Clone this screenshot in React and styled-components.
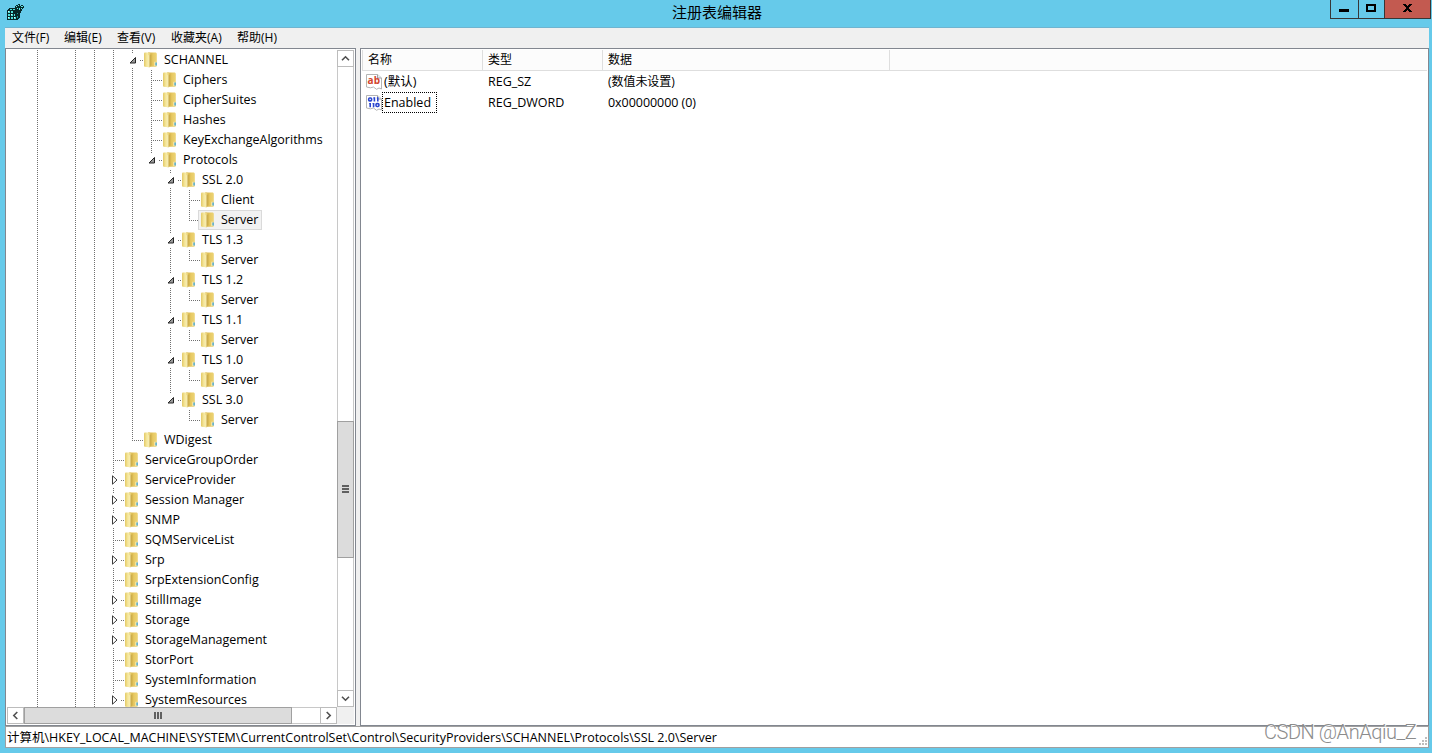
import styled, { createGlobalStyle, css } from "styled-components";

const GUIDE = "#707070";

// guide codes, one per 19px column:
// " " empty, "|" line, "T" branch, "L" last branch,
// "v" open, "w" open and last, ">" closed
const tree = [
  { guides: "| |||v", name: "SCHANNEL" },
  { guides: "| ||||T", name: "Ciphers" },
  { guides: "| ||||T", name: "CipherSuites" },
  { guides: "| ||||T", name: "Hashes" },
  { guides: "| ||||T", name: "KeyExchangeAlgorithms" },
  { guides: "| ||||w", name: "Protocols" },
  { guides: "| |||| v", name: "SSL 2.0" },
  { guides: "| |||| |T", name: "Client" },
  { guides: "| |||| |L", name: "Server", selected: true },
  { guides: "| |||| v", name: "TLS 1.3" },
  { guides: "| |||| |L", name: "Server" },
  { guides: "| |||| v", name: "TLS 1.2" },
  { guides: "| |||| |L", name: "Server" },
  { guides: "| |||| v", name: "TLS 1.1" },
  { guides: "| |||| |L", name: "Server" },
  { guides: "| |||| v", name: "TLS 1.0" },
  { guides: "| |||| |L", name: "Server" },
  { guides: "| |||| w", name: "SSL 3.0" },
  { guides: "| ||||  L", name: "Server" },
  { guides: "| |||L", name: "WDigest" },
  { guides: "| ||T", name: "ServiceGroupOrder" },
  { guides: "| ||>", name: "ServiceProvider" },
  { guides: "| ||>", name: "Session Manager" },
  { guides: "| ||>", name: "SNMP" },
  { guides: "| ||T", name: "SQMServiceList" },
  { guides: "| ||>", name: "Srp" },
  { guides: "| ||T", name: "SrpExtensionConfig" },
  { guides: "| ||>", name: "StillImage" },
  { guides: "| ||>", name: "Storage" },
  { guides: "| ||>", name: "StorageManagement" },
  { guides: "| ||T", name: "StorPort" },
  { guides: "| ||T", name: "SystemInformation" },
  { guides: "| ||>", name: "SystemResources" },
];

const menus = [
  { label: "文件(F)", width: 52 },
  { label: "编辑(E)", width: 53 },
  { label: "查看(V)", width: 54 },
  { label: "收藏夹(A)", width: 66 },
  { label: "帮助(H)", width: 60 },
];

const values = [
  { name: "(默认)", type: "REG_SZ", data: "(数值未设置)", kind: "string" },
  {
    name: "Enabled",
    type: "REG_DWORD",
    data: "0x00000000 (0)",
    kind: "binary",
    focused: true,
  },
];

const RegeditIcon = () => (
  <svg width="17" height="17" viewBox="0 0 17 17" shapeRendering="crispEdges">
    <path d="M0 6h1V5h1V4h8v1h3v9h-1v1h-1v1H0z" fill="#07282a" />
    <path
      d="M1 7h2v2H1zM4 7h2v2H4zM1 10h2v2H1zM4 10h2v2H4zM1 13h2v2H1zM4 13h2v2H4zM7 13h2v2H7zM7 10h1v2H7zM3 5h2v1H3zM6 5h2v1H6z"
      fill="#4fe0dc"
    />
    <path d="M1 7h1v1H1zM4 10h1v1H4zM1 13h1v1H1zM7 13h1v1H7z" fill="#e6ffff" />
    <path d="M10 12h1v2h-1zM10 9h1v1h-1z" fill="#1b9c9c" />
    <path d="M8 2h1V1h2V0h2v2h1V1h2v1h1v2h-1v1h-1v2h-1v2h-3V7H9V5H8z" fill="#07282a" />
    <path d="M9 2h1v1H9zM11 1h1v1h-1zM14 2h2v1h-2zM12 4h1v2h-1zM10 4h1v1h-1zM14 4h1v1h-1z" fill="#5fe8e4" />
  </svg>
);

const FolderIcon = () => (
  <svg width="16" height="16" viewBox="0 0 16 16">
    <defs>
      <linearGradient id="folderBack" x1="0" x2="1">
        <stop offset="0" stopColor="#cfa93e" />
        <stop offset="0.6" stopColor="#e8ca64" />
        <stop offset="1" stopColor="#ecd478" />
      </linearGradient>
      <linearGradient id="folderFront" x1="0" x2="1">
        <stop offset="0" stopColor="#e3c965" />
        <stop offset="0.5" stopColor="#f8eca6" />
        <stop offset="1" stopColor="#e2c664" />
      </linearGradient>
    </defs>
    <path d="M6 .6h8l.8.8v12.8l-.8.6H7z" fill="url(#folderBack)" />
    <path d="M2 1.2l.6-.7h5l1 .9v13l-1.4.9-4.6-.6-.6-.6z" fill="url(#folderFront)" />
    <path d="M7 3.2l2.4-1V13L7 15.6z" fill="#cdae4c" />
    <path d="M6.4 3.2l1-.3V15l-1 .4z" fill="#fbf3c4" />
    <path d="M12.4 9.8h1.2V14h-1.2z" fill="#f8f0c0" />
    <path d="M13.4 10.4h1.4v3.2h-1.4z" fill="#45a8de" />
  </svg>
);

const ValueIcon = ({ kind }) => (
  <svg width="16" height="16" viewBox="0 0 16 16">
    <path d="M.5.5h11l4 3.5v11l-2.5-1-2.5 1.3-3-2.3-3 .8L.5 13z" fill="#fff" stroke="#b4b4b4" />
    <path d="M11.5.5V4h4" fill="#eee" stroke="#a0a0a0" />
    {kind === "string" ? (
      <IconText x="1.6" y="10">
        ab
      </IconText>
    ) : (
      <g fill="none" stroke="#2a45cf" strokeWidth="1.6">
        <rect x="2.7" y="3" width="2.9" height="2.9" rx="1" />
        <path d="M8.4 2.3v4.3M11.8 2.3v4.3M4.2 7.9v4.3M7.6 7.9v4.3" />
        <path d="M7.4 3h1M10.8 3h1M3.2 8.6h1M6.6 8.6h1" strokeWidth="1" />
        <rect x="10" y="8.6" width="2.9" height="2.9" rx="1" />
      </g>
    )}
  </svg>
);

const Expander = ({ open }) => (
  <svg width="9" height="10" viewBox="0 0 9 10">
    {open ? (
      <path d="M7.5 1.5V7H2z" fill="#9a9a9a" stroke="#262626" />
    ) : (
      <path d="M3.5.8v8.4L8 5z" fill="#fff" stroke="#3c3c3c" />
    )}
  </svg>
);

const Arrow = ({ turn }) => (
  <svg width="9" height="9" viewBox="0 0 9 9">
    <path
      d="M1 6.3L4.5 2.8 8 6.3"
      fill="none"
      stroke="#505050"
      strokeWidth="1.6"
      transform={`rotate(${turn} 4.5 4.5)`}
    />
  </svg>
);

const TreeRow = ({ guides, name, selected }) => (
  <Row>
    {guides.split("").map((code, i) => (
      <Guide key={i} $code={code}>
        {"vw>".includes(code) && <Expander open={code !== ">"} />}
      </Guide>
    ))}
    <Node $selected={selected}>
      <FolderIcon />
      <span>{name}</span>
    </Node>
  </Row>
);

const App = () => {
  return (
    <Window>
      <GlobalStyle />
      <TitleBar>
        <RegeditIcon />
        <Title>注册表编辑器</Title>
        <Controls>
          <Control $width={27}>
            <svg width="10" height="9" shapeRendering="crispEdges">
              <path d="M0 5h10v3H0z" />
            </svg>
          </Control>
          <Control $width={26}>
            <svg width="10" height="9" shapeRendering="crispEdges">
              <path d="M0 0h10v8H0zM2 2v4h6V2z" fillRule="evenodd" />
            </svg>
          </Control>
          <Control $width={46} $close>
            <svg width="9" height="8" shapeRendering="crispEdges">
              <path d="M0 0h3v1h1v1h1V1h1V0h3v1H8v1H7v1H6v2h1v1h1v1h1v1H6V7H5V6H4v1H3v1H0V7h1V6h1V5h1V3H2V2H1V1H0z" />
            </svg>
          </Control>
        </Controls>
      </TitleBar>
      <MenuBar>
        {menus.map((menu) => (
          <MenuItem key={menu.label} $width={menu.width}>
            {menu.label}
          </MenuItem>
        ))}
      </MenuBar>
      <Panels>
        <TreePanel>
          <TreeView>
            <Rows>
              {tree.map((row, i) => (
                <TreeRow key={i} {...row} />
              ))}
            </Rows>
            <VerticalBar>
              <BarButton>
                <Arrow turn={0} />
              </BarButton>
              <VerticalTrack>
                <VerticalThumb>
                  <svg width="7" height="8" shapeRendering="crispEdges">
                    <path d="M0 0h7v2H0zM0 3h7v2H0zM0 6h7v2H0z" fill="#606060" />
                  </svg>
                </VerticalThumb>
              </VerticalTrack>
              <BarButton>
                <Arrow turn={180} />
              </BarButton>
            </VerticalBar>
          </TreeView>
          <HorizontalBar>
            <BarButton>
              <Arrow turn={-90} />
            </BarButton>
            <HorizontalThumb>
              <svg width="8" height="7" shapeRendering="crispEdges">
                <path d="M0 0h2v7H0zM3 0h2v7H3zM6 0h2v7H6z" fill="#606060" />
              </svg>
            </HorizontalThumb>
            <HorizontalTrack />
            <BarButton>
              <Arrow turn={90} />
            </BarButton>
            <Corner />
          </HorizontalBar>
        </TreePanel>
        <ListPanel>
          <ListHeader>
            <HeaderCell $width={120}>名称</HeaderCell>
            <HeaderCell $width={120}>类型</HeaderCell>
            <HeaderCell $width={287}>数据</HeaderCell>
          </ListHeader>
          {values.map((value) => (
            <ListRow key={value.name} $small={value.kind === "string"}>
              <NameCell>
                <ValueIcon kind={value.kind} />
                <ValueName $focused={value.focused}>{value.name}</ValueName>
              </NameCell>
              <TypeCell>{value.type}</TypeCell>
              <DataCell>{value.data}</DataCell>
            </ListRow>
          ))}
        </ListPanel>
      </Panels>
      <StatusBar>
        <Path>
          计算机\HKEY_LOCAL_MACHINE\SYSTEM\CurrentControlSet\Control\SecurityProviders\SCHANNEL\Protocols\SSL
          2.0\Server
        </Path>
        <Grip width="10" height="10" shapeRendering="crispEdges">
          <path
            d="M7 0h2v2H7zM4 3h2v2H4zM7 3h2v2H7zM1 6h2v2H1zM4 6h2v2H4zM7 6h2v2H7z"
            fill="#bdbdbd"
          />
        </Grip>
      </StatusBar>
      <Watermark>CSDN @AnAqiu_Z</Watermark>
    </Window>
  );
};

const GlobalStyle = createGlobalStyle`
  * {
    box-sizing: border-box;
  }

  body {
    margin: 0;
    overflow: hidden;
    font-family: "Open Sans", "Noto Sans CJK SC", sans-serif;
    font-size: 12.5px;
    color: #000;
  }

  svg {
    display: block;
    flex-shrink: 0;
  }
`;

const Window = styled.div`
  position: relative;
  display: flex;
  flex-direction: column;
  width: 1432px;
  height: 753px;
  padding: 0 3px 5px 5px;
  background: #66caea;
`;

const TitleBar = styled.div`
  display: flex;
  align-items: flex-start;
  justify-content: space-between;
  height: 28px;
  border-bottom: 1px solid #6fb4d0;

  > svg {
    margin: 4px 0 0 2px;
  }
`;

const Title = styled.div`
  font-size: 15px;
  line-height: 25px;
  margin-left: 80px;
`;

const Controls = styled.div`
  display: flex;
  height: 19px;
  margin-right: -2px;
  border: 1px solid #373737;
  border-top: 0;
`;

const Control = styled.div`
  display: flex;
  justify-content: center;
  width: ${({ $width }) => $width}px;
  padding-top: 4px;
  background: ${({ $close }) => ($close ? "#c35a50" : "transparent")};
  border-left: 1px solid #373737;

  &:first-child {
    border-left: 0;
  }
`;

const MenuBar = styled.div`
  display: flex;
  height: 20px;
  padding-left: 7px;
  background: #f0f0f0;
`;

const MenuItem = styled.div`
  width: ${({ $width }) => $width}px;
  font-size: 12px;
  line-height: 20px;
  white-space: nowrap;
`;

const Panels = styled.div`
  display: flex;
  gap: 4px;
  height: 678px;
  background: #f0f0f0;
`;

const TreePanel = styled.div`
  width: 351px;
  padding: 1px;
  background: #fff;
  border: 1px solid #828790;
`;

const TreeView = styled.div`
  display: flex;
  height: 657px;
`;

const Rows = styled.div`
  flex: 1;
  overflow: hidden;
`;

const Row = styled.div`
  display: flex;
  height: 20px;
  padding-left: 20px;
`;

const dots = (angle) =>
  `repeating-linear-gradient(${angle}, ${GUIDE} 0 1px, transparent 1px 2px)`;

const down = dots("180deg");
const across = dots("90deg");

const guideStyles = {
  "|": css`
    background: ${down} 10px 0 / 1px 20px no-repeat;
  `,
  T: css`
    background: ${down} 10px 0 / 1px 20px no-repeat,
      ${across} 10px 10px / 9px 1px no-repeat;
  `,
  L: css`
    background: ${down} 10px 0 / 1px 10px no-repeat,
      ${across} 10px 10px / 9px 1px no-repeat;
  `,
  v: css`
    background: ${down} 10px 0 / 1px 3px no-repeat,
      ${down} 10px 18px / 1px 2px no-repeat,
      ${across} 18px 10px / 1px 1px no-repeat;
  `,
  w: css`
    background: ${down} 10px 0 / 1px 3px no-repeat,
      ${across} 18px 10px / 1px 1px no-repeat;
  `,
  ">": css`
    background: ${down} 10px 0 / 1px 3px no-repeat,
      ${down} 10px 18px / 1px 2px no-repeat,
      ${across} 18px 10px / 1px 1px no-repeat;
  `,
};

const Guide = styled.div`
  flex: 0 0 19px;
  padding: ${({ $code }) => ($code === ">" ? 5 : 6)}px 0 0 6px;
  ${({ $code }) => guideStyles[$code]}
`;

const Node = styled.div`
  display: flex;
  align-items: center;
  gap: 6px;
  height: 20px;
  padding-right: 3px;
  line-height: 18px;
  white-space: nowrap;
  border: 1px solid ${({ $selected }) => ($selected ? "#dadada" : "transparent")};
  background: ${({ $selected }) =>
    $selected ? "#f2f2f2" : `${across} 0 9px / 2px 1px no-repeat`};
`;

const VerticalBar = styled.div`
  display: flex;
  flex-direction: column;
  width: 17px;
`;

const BarButton = styled.div`
  display: flex;
  align-items: center;
  justify-content: center;
  width: 17px;
  height: 17px;
  background: #fff;
  border: 1px solid #bcbcbc;
`;

const VerticalTrack = styled.div`
  flex: 1;
  padding-top: 354px;
  border: solid #c8c8c8;
  border-width: 0 1px;
`;

const VerticalThumb = styled.div`
  display: flex;
  align-items: center;
  justify-content: center;
  height: 137px;
  margin: 0 -1px;
  padding-bottom: 1px;
  background: #dcdcdc;
  border: 1px solid #a0a0a0;
`;

const HorizontalBar = styled.div`
  display: flex;
  height: 17px;
`;

const HorizontalThumb = styled.div`
  display: flex;
  align-items: center;
  justify-content: center;
  width: 268px;
  background: #dcdcdc;
  border: 1px solid #a0a0a0;
`;

const HorizontalTrack = styled.div`
  flex: 1;
  border: solid #c8c8c8;
  border-width: 1px 0;
`;

const Corner = styled.div`
  width: 17px;
  background: #f0f0f0;
`;

const ListPanel = styled.div`
  flex: 1;
  padding: 1px;
  background: #fff;
  border: 1px solid #828790;
`;

const ListHeader = styled.div`
  display: flex;
  height: 21px;
  background: #fcfcfc;
  border-bottom: 1px solid #dedede;
  border-left: 1px solid #dedede;
`;

const HeaderCell = styled.div`
  width: ${({ $width }) => $width}px;
  padding-left: 5px;
  font-size: 12px;
  line-height: 20px;
  border-right: 1px solid #dedede;
`;

const NameCell = styled.div`
  display: flex;
  align-items: center;
  width: 122px;
`;

const ValueName = styled.span`
  height: 21px;
  padding: 0 5px 0 1px;
  line-height: 19px;
  border: 1px ${({ $focused }) => ($focused ? "dotted #000" : "solid transparent")};
`;

const TypeCell = styled.span`
  width: 120px;
`;

const DataCell = styled.span`
  letter-spacing: -0.05px;
`;

const ListRow = styled.div`
  display: flex;
  height: 21px;
  padding-left: 4px;
  line-height: 21px;

  ${DataCell} {
    font-size: ${({ $small }) => ($small ? 12 : 12.5)}px;
  }
`;

const IconText = styled.text`
  font: bold 10px "Open Sans", sans-serif;
  fill: #d2452c;
`;

const StatusBar = styled.div`
  display: flex;
  align-items: flex-end;
  justify-content: space-between;
  height: 22px;
  background: #fff;
  border: 1px solid #a0a0a0;
`;

const Path = styled.span`
  padding-left: 1px;
  line-height: 19px;
  white-space: nowrap;
`;

const Grip = styled.svg`
  margin-right: 0;
`;

const Watermark = styled.div`
  position: absolute;
  top: 719px;
  left: 1264px;
  font: 300 20px/26px Roboto, sans-serif;
  letter-spacing: -0.45px;
  color: #8c8c8c;
  text-shadow: 1px 1px 0 #fff;
`;

export default App;
